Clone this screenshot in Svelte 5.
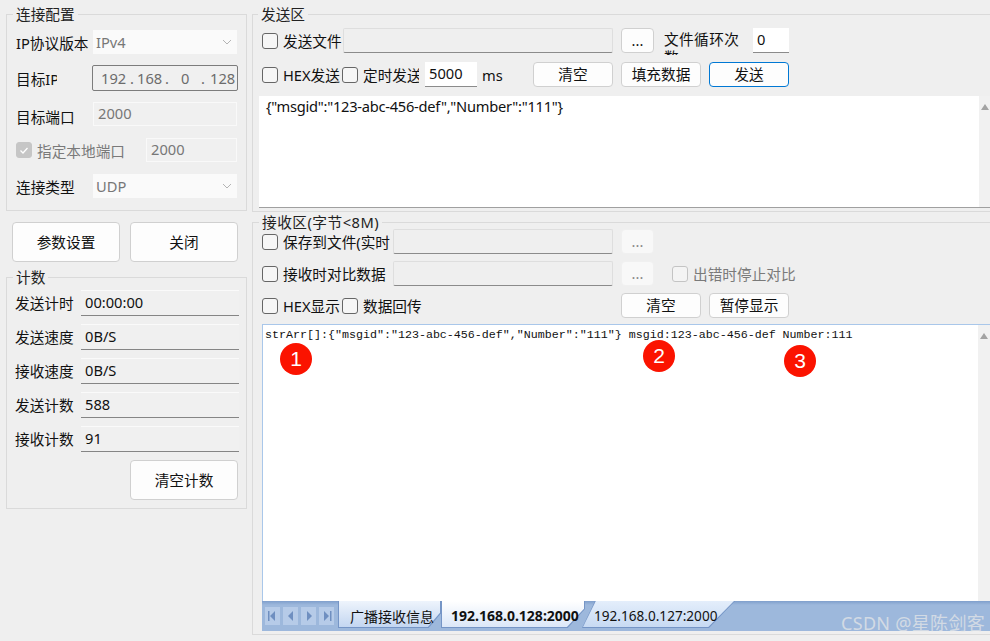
<script>
	const counters = [
		['发送计时', '00:00:00'],
		['发送速度', '0B/S'],
		['接收速度', '0B/S'],
		['发送计数', '588'],
		['接收计数', '91']
	];
	const badges = [
		{ n: 1, cls: 'b1' },
		{ n: 2, cls: 'b2' },
		{ n: 3, cls: 'b3' }
	];
	const navIcons = [
		'M10 3v10L5 8zM3 3h1.5v10H3z',
		'M10 3v10L5 8z',
		'M6 3v10l5-5z',
		'M5 3v10l5-5zM11 3h1.5v10H11z'
	];
</script>

<div class="page">
	<div class="left">
		<fieldset class="group conn">
			<legend>连接配置</legend>
			<div class="row">
				<span class="lbl w77">IP协议版本</span>
				<div class="combo">IPv4<svg width="10" height="6" viewBox="0 0 10 6"><path d="M1 1l4 4 4-4" fill="none" stroke="#b4b4b4" /></svg></div>
			</div>
			<div class="row">
				<span class="lbl clip">目标IP</span>
				<div class="ip">
					<span>192</span><i>.</i><span>168</span><i>.</i><span>0</span><i>.</i><span>128</span>
				</div>
			</div>
			<div class="row">
				<span class="lbl w77 low">目标端口</span>
				<div class="field off w144">2000</div>
			</div>
			<div class="row">
				<label class="check w130 dis"><span class="box on"><svg width="12" height="12" viewBox="0 0 12 12"><path d="M2.5 6.5l2.500 2.500 4.500-5" fill="none" stroke="#fff" stroke-width="1.300" /></svg></span>指定本地端口</label>
				<div class="field off w91">2000</div>
			</div>
			<div class="row">
				<span class="lbl w77">连接类型</span>
				<div class="combo">UDP<svg width="10" height="6" viewBox="0 0 10 6"><path d="M1 1l4 4 4-4" fill="none" stroke="#b4b4b4" /></svg></div>
			</div>
		</fieldset>

		<div class="actions">
			<button class="btn big">参数设置</button>
			<button class="btn big">关闭</button>
		</div>

		<fieldset class="group count">
			<legend>计数</legend>
			{#each counters as [name, value]}
				<div class="count-row">
					<span class="lbl w66">{name}</span>
					<div class="field stat">{value}</div>
				</div>
			{/each}
			<div class="count-foot">
				<button class="btn big">清空计数</button>
			</div>
		</fieldset>
	</div>

	<div class="right">
		<fieldset class="group send">
			<legend>发送区</legend>
			<div class="line">
				<label class="check w81"><span class="box"></span>发送文件</label>
				<div class="field sunk w270"></div>
				<button class="btn dots ml8">...</button>
				<div class="loops">文件循环次数</div>
				<div class="field white w36">0</div>
			</div>
			<div class="line">
				<label class="check w80"><span class="box"></span>HEX发送</label>
				<label class="check w77 cut"><span class="box"></span>定时发送</label>
				<div class="field white w52 ml6">5000</div>
				<span class="ms">ms</span>
				<button class="btn mid">清空</button>
				<button class="btn mid ml8">填充数据</button>
				<button class="btn mid ml8 primary">发送</button>
			</div>
			<div class="send-text">
				<div class="send-body">{'{"msgid":"123-abc-456-def","Number":"111"}'}</div>
				<div class="scroll"><span class="arrow"></span></div>
			</div>
		</fieldset>

		<fieldset class="group recv">
			<legend>接收区(字节&lt;8M)</legend>
			<div class="line tight">
				<label class="check w131"><span class="box"></span><span class="cut-text">保存到文件(实时</span></label>
				<div class="field sunk w220"></div>
				<button class="btn dots ml8 faded">...</button>
			</div>
			<div class="line tight">
				<label class="check w131"><span class="box"></span>接收时对比数据</label>
				<div class="field sunk w220"></div>
				<button class="btn dots ml8 faded">...</button>
				<label class="check stop dis"><span class="box pale"></span>出错时停止对比</label>
			</div>
			<div class="line tight last">
				<label class="check w80"><span class="box"></span>HEX显示</label>
				<label class="check w279"><span class="box"></span>数据回传</label>
				<button class="btn mid">清空</button>
				<button class="btn mid ml8">暂停显示</button>
			</div>
			<div class="recv-text">
				<div class="recv-body">strArr[]:{'{"msgid":"123-abc-456-def","Number":"111"}'} msgid:123-abc-456-def Number:111</div>
				<div class="scroll wide"><span class="arrow"></span></div>
				{#each badges as b}
					<span class="badge {b.cls}">{b.n}</span>
				{/each}
			</div>
			<div class="tabs">
				<div class="nav">
					{#each navIcons as d}
						<span class="nav-btn"><svg width="15" height="16" viewBox="0 0 15 16"><path {d} fill="#6f8fc0" /></svg></span>
					{/each}
				</div>
				<div class="tab t1"><span>广播接收信息</span></div>
				<div class="tab t2"><span>192.168.0.128:2000</span></div>
				<div class="tab t3"><span>192.168.0.127:2000</span></div>
				<span class="mark">CSDN @星陈剑客</span>
			</div>
		</fieldset>
	</div>
</div>

<style>
	:global(body) {
		margin: 0;
		background: #efefef;
	}
	.page {
		width: 990px;
		height: 641px;
		overflow: hidden;
		display: flex;
		background: #efefef;
		color: #111;
		font: 14.67px 'Noto Sans', 'Noto Sans CJK SC', sans-serif;
	}
	.left {
		width: 241px;
		margin: 0 5px 0 6px;
		flex: none;
	}
	.right {
		width: 738px;
		flex: none;
	}
	.group {
		margin: 0;
		padding: 0;
		min-width: 0;
		border: 1px solid #dadada;
		box-sizing: border-box;
	}
	legend {
		padding: 0 3px;
		margin-left: -3px;
		height: 20px;
		line-height: 20px;
		color: #222;
	}
	.conn {
		margin-top: 4px;
		height: 207px;
		padding: 6px 0 0 9px;
		display: flex;
		flex-direction: column;
		gap: 12px;
	}
	.row {
		display: flex;
		align-items: center;
		height: 24px;
	}
	.lbl {
		flex: none;
		white-space: nowrap;
	}
	.w77 {
		width: 77px;
	}
	.w66 {
		width: 66px;
	}
	.low {
		margin-top: 5px;
	}
	.clip {
		width: 41px;
		margin-right: 35px;
		overflow: hidden;
	}
	.combo {
		width: 144px;
		height: 24px;
		box-sizing: border-box;
		padding-left: 3px;
		display: flex;
		align-items: center;
		justify-content: space-between;
		padding-right: 5px;
		background: #fafafa;
		color: #777;
	}
	.ip {
		width: 146px;
		height: 26px;
		box-sizing: border-box;
		border: 1px solid #7c7c7c;
		border-radius: 2px;
		background: #f0f0f0;
		color: #6c6c6c;
		display: grid;
		grid-template-columns: 28px 8px 27px 17px 19px 10px 27px;
		padding-left: 8px;
		align-items: center;
		line-height: 22px;
	}
	.ip i {
		font-style: normal;
		text-align: left;
		padding-left: 1px;
	}
	.field {
		height: 25px;
		box-sizing: border-box;
		line-height: 23px;
		padding-left: 4px;
		flex: none;
	}
	.off {
		height: 24px;
		border: 1px solid #f9f9f9;
		background: #f0f0f0;
		color: #777;
		line-height: 20px;
	}
	.w144 {
		width: 144px;
	}
	.w91 {
		width: 91px;
		margin-left: 21px;
	}
	.w270 {
		width: 270px;
	}
	.w220 {
		width: 220px;
	}
	.w36 {
		width: 36px;
	}
	.w52 {
		width: 52px;
	}
	.sunk {
		border: 1px solid #dedede;
		border-bottom-color: #8b8b8b;
		border-radius: 2px;
		background: #efefef;
	}
	.white {
		background: #fff;
		border-bottom: 1px solid #8b8b8b;
	}
	.stat {
		width: 158px;
		height: 26px;
		background: #f0f0f0;
		border-top: 1px solid #fafafa;
		border-bottom: 1px solid #858585;
		line-height: 22px;
		color: #111;
	}
	.check {
		display: flex;
		align-items: center;
		gap: 5px;
		flex: none;
		white-space: nowrap;
	}
	.w81 {
		width: 81px;
	}
	.w80 {
		width: 80px;
	}
	.w130 {
		width: 109px;
	}
	.w131 {
		width: 131px;
		overflow: hidden;
	}
	.w279 {
		width: 279px;
	}
	.cut {
		width: 77px;
		overflow: hidden;
	}
	.cut-text {
		display: block;
		overflow: hidden;
	}
	.dis {
		color: #7a7a7a;
	}
	.box {
		width: 16px;
		height: 16px;
		box-sizing: border-box;
		flex: none;
		border: 1px solid #666;
		border-radius: 3px;
		background: #f6f6f6;
		display: flex;
		align-items: center;
		justify-content: center;
	}
	.on {
		background: #c6c6c6;
		border-color: #c6c6c6;
	}
	.pale {
		border-color: #c4c4c4;
		background: #f4f4f4;
	}
	.actions {
		display: flex;
		gap: 10px;
		margin: 11px 0 5px 6px;
	}
	.btn {
		font: inherit;
		color: #111;
		padding: 0 0 2px;
		background: #fdfdfd;
		border: 1px solid #d0d0d0;
		border-radius: 4px;
		box-sizing: border-box;
		flex: none;
		white-space: nowrap;
	}
	.big {
		width: 108px;
		height: 40px;
	}
	.count {
		height: 242px;
		padding: 3px 0 0 8px;
	}
	.count legend {
		margin-left: -2px;
	}
	.count-row {
		display: flex;
		align-items: center;
		height: 26px;
		margin-bottom: 8px;
	}
	.count-row .lbl {
		padding-bottom: 2px;
	}
	.count-foot {
		display: flex;
		justify-content: flex-end;
		margin: 1px 8px 0 0;
	}
	.line {
		display: flex;
		align-items: center;
		height: 25px;
		padding-left: 9px;
		margin-bottom: 9px;
	}
	.tight {
		margin-bottom: 7px;
	}
	.last {
		margin-bottom: 6px;
	}
	.ml8 {
		margin-left: 8px;
	}
	.ml6 {
		margin-left: 6px;
	}
	.dots {
		width: 33px;
		height: 25px;
	}
	.faded {
		background: #f8f8f8;
		border-color: #f0f0f0;
		color: #888;
	}
	.mid {
		width: 80px;
		height: 25px;
	}
	.primary {
		border-color: #0078d4;
	}
	.ms {
		width: 56px;
		padding-left: 5px;
		box-sizing: border-box;
		flex: none;
	}
	.loops {
		width: 85px;
		height: 25px;
		margin: 2px 4px 0 10px;
		line-height: 18px;
		overflow: hidden;
		flex: none;
		align-self: flex-start;
		letter-spacing: 0.4px;
	}
	.send {
		margin-top: 4px;
		height: 208px;
		border-right: 0;
		padding-top: 4px;
	}
	.send legend {
		margin-left: 5px;
	}
	.send-text {
		margin-left: 6px;
		height: 112px;
		display: flex;
		background: #fff;
		border-bottom: 1px solid #a0a0a0;
		box-sizing: border-box;
	}
	.send-body {
		flex: 1;
		padding: 0 7px;
		letter-spacing: -0.26px;
		white-space: nowrap;
	}
	.scroll {
		width: 11px;
		flex: none;
		background: #f1f1f1;
		display: flex;
		justify-content: center;
		padding-top: 8px;
		box-sizing: border-box;
	}
	.wide {
		width: 12px;
	}
	.arrow {
		width: 0;
		height: 0;
		border: 4px solid transparent;
		border-top: 0;
		border-bottom: 6px solid #a3a3a3;
	}
	.recv {
		margin-top: 3px;
		height: 420px;
		border-right: 0;
	}
	.recv legend {
		height: 14px;
		line-height: 14px;
		margin-left: 6px;
		letter-spacing: 0.5px;
	}
	.stop {
		margin-left: 18px;
	}
	.recv-text {
		position: relative;
		margin-left: 9px;
		height: 277px;
		box-sizing: border-box;
		display: flex;
		background: #fff;
		border: 1px solid #a9c7ea;
		border-width: 1px 0 0 1px;
	}
	.recv-body {
		flex: 1;
		padding: 1px 2px;
		font: 11.67px/18px 'Liberation Mono', monospace;
		white-space: nowrap;
		color: #111;
	}
	.badge {
		position: absolute;
		width: 32px;
		height: 32px;
		border-radius: 50%;
		background: #fb1300;
		color: #fff;
		font: 21px/32px 'Liberation Sans', sans-serif;
		text-align: center;
	}
	.b1 {
		left: 17px;
		top: 18px;
	}
	.b2 {
		left: 380px;
		top: 15px;
	}
	.b3 {
		left: 521px;
		top: 20px;
	}
	.tabs {
		position: relative;
		margin-left: 9px;
		height: 30px;
		display: flex;
		background: #9db8dc;
		background-image: linear-gradient(#7f9fcc, #9db8dc 4px);
	}
	.nav {
		width: 76px;
		display: flex;
		gap: 3px;
		padding: 6px 0 0 3px;
		box-sizing: border-box;
		flex: none;
	}
	.nav-btn {
		width: 15px;
		height: 18px;
		background: #b6cbe8;
		display: flex;
		align-items: center;
		justify-content: center;
	}
	.tab {
		position: relative;
		height: 27px;
		box-sizing: border-box;
		padding-top: 5px;
		flex: none;
		white-space: nowrap;
		font-size: 14px;
	}
	.tab::after,
	.tab::before {
		content: '';
		position: absolute;
		clip-path: var(--cut);
	}
	.tab::after {
		inset: 0;
		background: #7595c6;
	}
	.tab::before {
		inset: 0 1px 1px 1px;
		z-index: 1;
	}
	.tab span {
		position: relative;
		z-index: 2;
	}
	.t1 {
		width: 103px;
		padding-left: 12px;
		--cut: polygon(0 0, 100% 0, 100% 45%, 88% 100%, 0 100%);
	}
	.t1::before {
		background: linear-gradient(#eef4fc, #c3d6f1);
	}
	.t2 {
		width: 144px;
		padding-left: 10px;
		font-weight: 700;
		--cut: polygon(0 0, 100% 0, 100% 30%, 88% 100%, 0 100%);
	}
	.t2::before {
		background: linear-gradient(#fff, #dbe7f8);
	}
	.t3 {
		width: 153px;
		margin-left: -3px;
		padding-left: 12px;
		font-size: 13.6px;
		--cut: polygon(8.5% 0, 100% 0, 83% 100%, 0 100%);
	}
	.t3::before {
		background: linear-gradient(#e4eefb, #c7daf3);
	}
	.mark {
		position: absolute;
		right: 5px;
		top: 8px;
		z-index: 3;
		font-size: 18px;
		letter-spacing: 0.3px;
		color: rgba(232, 232, 232, 0.72);
		white-space: nowrap;
	}
</style>
